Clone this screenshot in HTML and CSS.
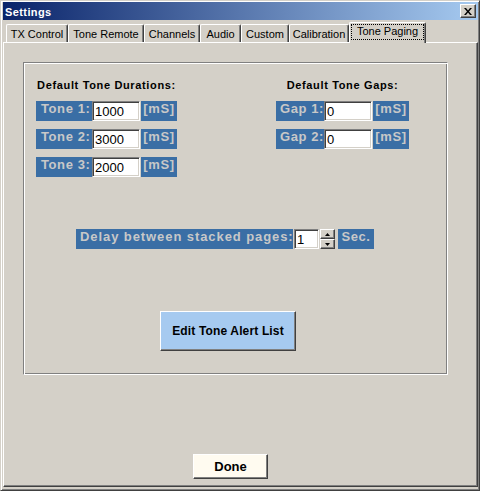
FILE: index.html
```html
<!DOCTYPE html>
<html>
<head>
<meta charset="utf-8">
<title>Settings</title>
<link rel="stylesheet" href="styles.css">
</head>
<body>
<div class="window">
  <div class="titlebar">
    <span class="title">Settings</span>
    <button class="close" aria-label="Close">
      <svg width="8" height="7" viewBox="0 0 8 7"><path d="M0 0h2l2 2.4 2-2.4h2l-3 3.5 3 3.5h-2l-2-2.4-2 2.4h-2l3-3.5z" fill="#000"/></svg>
    </button>
  </div>
  <div class="tabstrip">
    <div class="tab tab-tx">TX Control</div>
    <div class="tab tab-remote">Tone Remote</div>
    <div class="tab tab-channels">Channels</div>
    <div class="tab tab-audio">Audio</div>
    <div class="tab tab-custom">Custom</div>
    <div class="tab tab-cal">Calibration</div>
    <div class="tab tab-paging selected"><span class="focus">Tone Paging</span></div>
  </div>
  <div class="panel">
    <div class="group">
      <div class="cols">
        <div class="col">
          <div class="heading">Default Tone Durations:</div>
          <div class="rows">
            <div class="row"><span class="lbl lbl-tone">Tone 1:</span><input class="field" type="text" value="1000"><span class="lbl unit">[mS]</span></div>
            <div class="row"><span class="lbl lbl-tone">Tone 2:</span><input class="field" type="text" value="3000"><span class="lbl unit">[mS]</span></div>
            <div class="row"><span class="lbl lbl-tone">Tone 3:</span><input class="field" type="text" value="2000"><span class="lbl unit">[mS]</span></div>
          </div>
        </div>
        <div class="col">
          <div class="heading">Default Tone Gaps:</div>
          <div class="rows">
            <div class="row"><span class="lbl lbl-gap">Gap 1:</span><input class="field" type="text" value="0"><span class="lbl unit">[mS]</span></div>
            <div class="row"><span class="lbl lbl-gap">Gap 2:</span><input class="field" type="text" value="0"><span class="lbl unit">[mS]</span></div>
          </div>
        </div>
      </div>
      <div class="delay">
        <span class="lbl lbl-delay">Delay between stacked pages:</span>
        <input class="field field-delay" type="text" value="1">
        <div class="spin">
          <span class="spin-btn"><svg width="5" height="3" viewBox="0 0 5 3"><path d="M2.5 0L5 3H0z" fill="#000"/></svg></span>
          <span class="spin-btn"><svg width="5" height="3" viewBox="0 0 5 3"><path d="M0 0h5L2.5 3z" fill="#000"/></svg></span>
        </div>
        <span class="lbl sec">Sec.</span>
      </div>
      <button class="btn edit">Edit Tone Alert List</button>
    </div>
    <button class="btn done">Done</button>
  </div>
</div>
</body>
</html>
```
FILE: styles.css
```css
body {
  margin: 0;
  background: #d4d0c8;
  font-family: "Liberation Sans", Arial, sans-serif;
}

.window {
  width: 480px;
  height: 491px;
  box-sizing: border-box;
  display: flex;
  flex-direction: column;
  background: #d4d0c8;
  border: 1px solid;
  border-color: #d4d0c8 #404040 #404040 #d4d0c8;
  box-shadow: inset 1px 1px #fff, inset -1px -1px #808080;
  padding: 1px 1px 3px 2px;
}

.titlebar {
  height: 18px;
  flex: none;
  display: flex;
  align-items: center;
  justify-content: space-between;
  padding: 0 2px;
  background: linear-gradient(to right, #0a246a, #a6caf0);
}

.title {
  color: #fff;
  font-weight: bold;
  font-size: 11px;
  letter-spacing: 0.4px;
  margin-top: 1px;
}

.close {
  width: 16px;
  height: 14px;
  padding: 0;
  margin: 0;
  box-sizing: border-box;
  background: #d4d0c8;
  border: 1px solid;
  border-color: #fff #404040 #404040 #fff;
  box-shadow: inset -1px -1px #808080;
  display: flex;
  align-items: center;
  justify-content: center;
}

.tabstrip {
  flex: none;
  display: flex;
  align-items: flex-end;
  height: 22px;
  padding-left: 3px;
}

.tab {
  height: 18px;
  box-sizing: border-box;
  font-size: 11px;
  line-height: 16px;
  padding-top: 1px;
  text-align: center;
  color: #000;
  white-space: nowrap;
  border-top: 1px solid #fff;
  border-left: 1px solid #fff;
  border-right: 1px solid #404040;
  box-shadow: inset -1px 0 #808080;
  border-radius: 2px 2px 0 0;
}

.tab-tx { width: 62px; }
.tab-remote { width: 76px; }
.tab-channels { width: 56px; }
.tab-audio { width: 41px; }
.tab-custom { width: 48px; }
.tab-cal { width: 60px; }
.tab-paging { width: 77px; }

.tab.selected {
  height: 21px;
  margin-bottom: -1px;
  padding-top: 0;
  position: relative;
  z-index: 1;
  background: #d4d0c8;
}

.focus {
  display: block;
  box-sizing: border-box;
  height: 16px;
  margin: 1px 1px 0 1px;
  border: 1px dotted #000;
  line-height: 13px;
}

.panel {
  flex: 1;
  display: flex;
  flex-direction: column;
  align-items: flex-start;
  border: 1px solid;
  border-color: #fff #404040 #404040 #fff;
  box-shadow: inset -1px -1px #808080;
}

.group {
  margin: 19px 0 0 19px;
  width: 425px;
  height: 313px;
  box-sizing: border-box;
  border: 1px solid;
  border-color: #808080 #fff #fff #808080;
  box-shadow: inset 1px 1px #fff, inset -1px -1px #808080;
  display: flex;
  flex-direction: column;
  align-items: flex-start;
}

.cols {
  display: flex;
  align-items: flex-start;
  gap: 99px;
  margin: 16px 0 0 12px;
}

.col {
  display: flex;
  flex-direction: column;
  align-items: center;
}

.heading {
  font-size: 11px;
  font-weight: bold;
  line-height: 13px;
  letter-spacing: 0.65px;
  margin-bottom: 9px;
  white-space: nowrap;
  color: #000;
}

.rows {
  display: flex;
  flex-direction: column;
  gap: 8px;
}

.row {
  display: flex;
  height: 20px;
}

.lbl {
  height: 20px;
  box-sizing: border-box;
  background: #3a6ea5;
  color: #c8c8c8;
  font-size: 13px;
  font-weight: bold;
  line-height: 16px;
  letter-spacing: 0.6px;
  white-space: nowrap;
  overflow: hidden;
}

.lbl-tone { width: 56px; padding-left: 5px; }
.lbl-gap { width: 48px; padding-left: 4px; }
.unit { width: 36px; margin-left: 1px; text-align: center; }

.field {
  width: 48px;
  height: 20px;
  margin: 0;
  box-sizing: border-box;
  padding: 1px 2px;
  background: #fff;
  border: 1px solid;
  border-color: #808080 #fff #fff #808080;
  box-shadow: inset 1px 1px #404040, inset -1px -1px #d4d0c8;
  font-family: "Liberation Sans", Arial, sans-serif;
  font-size: 13px;
  line-height: 16px;
  color: #000;
  outline: none;
}

.delay {
  display: flex;
  height: 20px;
  margin: 52px 0 0 52px;
}

.lbl-delay { width: 217px; padding-left: 4px; letter-spacing: 0.92px; }
.field-delay { width: 25px; margin-left: 1px; }

.spin {
  width: 15px;
  margin-left: 1px;
  display: flex;
  flex-direction: column;
}

.spin-btn {
  height: 10px;
  box-sizing: border-box;
  background: #d4d0c8;
  border: 1px solid;
  border-color: #fff #404040 #404040 #fff;
  box-shadow: inset -1px -1px #808080;
  display: flex;
  align-items: center;
  justify-content: center;
}

.sec { width: 36px; margin-left: 3px; text-align: center; }

.btn {
  box-sizing: border-box;
  padding: 0;
  border: 1px solid;
  border-color: #fff #404040 #404040 #fff;
  box-shadow: inset -1px -1px #808080;
  font-family: "Liberation Sans", Arial, sans-serif;
  font-weight: bold;
  color: #000;
}

.edit {
  margin: 62px 0 0 136px;
  width: 136px;
  height: 40px;
  background: #a6caf0;
  font-size: 12px;
  letter-spacing: 0.15px;
}

.done {
  margin: 79px 0 0 189px;
  width: 75px;
  height: 25px;
  background: #fffbf0;
  font-size: 13px;
}
```
